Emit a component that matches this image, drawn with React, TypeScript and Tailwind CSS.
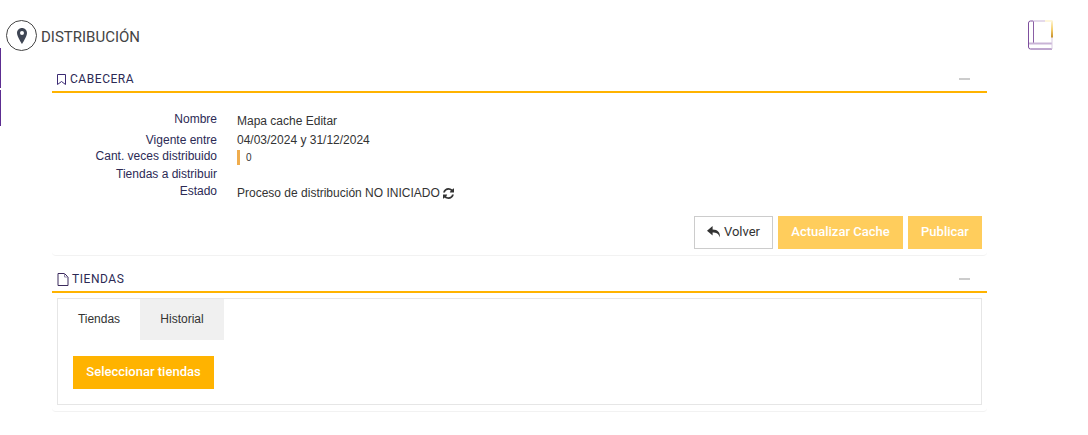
const rows = [
  { label: "Nombre", h: "h-[22px]", labelPad: "pt-[3px]", pad: "pt-[5px]", value: "Mapa cache Editar" },
  { label: "Vigente entre", h: "h-[18px]", labelPad: "pt-[2px]", pad: "pt-[2px]", value: "04/03/2024 y 31/12/2024" },
  { label: "Cant. veces distribuido", h: "h-[18px]", labelPad: "pt-0", pad: "pt-[3px]", value: "" },
  { label: "Tiendas a distribuir", h: "h-[17px]", labelPad: "pt-0", pad: "pt-0", value: "" },
  { label: "Estado", h: "h-[20px]", labelPad: "pt-0", pad: "pt-[2px]", value: "" },
];

const PinIcon = () => (
  <svg width="10" height="16" viewBox="0 0 10 16" className="text-[#3f4654]">
    <path
      fill="currentColor"
      fillRule="evenodd"
      d="M5 0C2.200 0 0 2.200 0 5c0 3.500 5 11 5 11s5-7.500 5-11c0-2.800-2.200-5-5-5zm0 3a2 2 0 1 1 0 4 2 2 0 0 1 0-4z"
    />
  </svg>
);

const BookIcon = () => (
  <svg width="25" height="30" viewBox="0 0 25 30" fill="none">
    <defs>
      <linearGradient id="bookEdge" gradientUnits="userSpaceOnUse" x1="0" y1="0" x2="0" y2="17">
        <stop offset="0" stopColor="#fff8dc" />
        <stop offset="0.55" stopColor="#f5d070" />
        <stop offset="1" stopColor="#c8922e" />
      </linearGradient>
    </defs>
    <path d="M5 1H2.500A2 2 0 0 0 .5 3v24a2 2 0 0 0 2 2H24" stroke="#7f4f9e" />
    <path d="M5.500 1v22" stroke="#8a5ea5" />
    <path d="M5 1h12" stroke="#c9b4d6" />
    <path d="M1 23.500h23" stroke="#c9b4d6" strokeWidth="2" />
    <path d="M24 17v12" stroke="#d9cbe2" />
    <path d="M24 .5v17" stroke="url(#bookEdge)" strokeWidth="2" />
    <path d="M17 1h7" stroke="#fff4cf" strokeWidth="1.500" />
  </svg>
);

const BookmarkIcon = () => (
  <svg width="9" height="11" viewBox="0 0 9 11" fill="none" className="text-[#3b2a73] mr-px">
    <path d="M.5.500h8v10l-4-3-4 3z" stroke="currentColor" />
  </svg>
);

const FileIcon = () => (
  <svg width="12" height="13" viewBox="0 0 12 13" fill="none" className="text-[#3b2a5c]">
    <path d="M1 .500h6.500L11 4v8.500H1z" stroke="currentColor" />
    <path d="M7.500.500V4H11" stroke="#8f86a8" />
  </svg>
);

const ReplyIcon = () => (
  <svg width="14" height="12" viewBox="0 0 14 12">
    <path fill="#333" d="M5.600 0 0 4.700l5.600 4.700V6.500c3.600 0 6 .7 7.300 5 .5-5.200-2-8-7.300-8.100z" />
  </svg>
);

const RefreshIcon = () => (
  <svg width="11" height="11" viewBox="0 0 1536 1536" className="ml-[3px] mt-[1px]">
    <path
      fill="#333"
      d="M1511 928q0 5-1 7-64 268-268 434.500T764 1536q-146 0-282.500-55T238 1324l-129 129q-19 19-45 19t-45-19-19-45V960q0-26 19-45t45-19h448q26 0 45 19t19 45-19 45l-137 137q71 66 161 102t187 36q134 0 250-65t186-179q11-17 53-117 8-23 30-23h192q13 0 22.500 9.500t9.500 22.500zm25-800v448q0 26-19 45t-45 19h-448q-26 0-45-19t-19-45 19-45l138-138Q969 256 768 256q-134 0-250 65T332 500q-11 17-53 117-8 23-30 23H50q-13 0-22.500-9.500T18 608v-7q65-268 270-434.500T768 0q146 0 284 55.500T1297 212l130-129q19-19 45-19t45 19 19 45z"
    />
  </svg>
);

const SectionHeader = ({ icon, title }: { icon: React.ReactNode; title: string }) => (
  <div className="flex items-center justify-between h-[28px] border-b-2 border-[#ffb300] pl-[5px] pr-[17px] pt-[2px]">
    <div className="flex items-center gap-[3px] text-[12px] tracking-[0.55px] text-[#2c2a55]">
      {icon}
      <span>{title}</span>
    </div>
    <div className="w-[11px] h-[2px] bg-[#cccccc]" />
  </div>
);

export default function App() {
  return (
    <div className="w-[1088px] h-[435px] bg-white flex font-['Roboto',sans-serif] overflow-hidden">
      <div className="w-[52px] shrink-0 relative">
        <div className="absolute left-0 top-[48px] w-px h-[40px] bg-[#5c2d91]" />
        <div className="absolute left-0 top-[90px] w-px h-[36px] bg-[#5c2d91]" />
      </div>

      <div className="w-[935px] shrink-0">
        <div className="h-[65px] flex items-start pt-[20px] -ml-[46px]">
          <div className="w-[31px] h-[31px] rounded-full border border-[#444] flex items-center justify-center mr-[4px]">
            <PinIcon />
          </div>
          <span className="text-[15px] leading-[32px] pt-px text-[#444]">DISTRIBUCIÓN</span>
        </div>

        <SectionHeader icon={<BookmarkIcon />} title="CABECERA" />

        <div className="h-[163px] border-b border-[#f2f2f2] rounded-b pt-[14px] text-[12px] font-['Liberation_Sans',sans-serif]">
          {rows.map((r) => (
            <div key={r.label} className={`flex ${r.h}`}>
              <div className={`w-[165px] text-right text-[#2c2a55] ${r.labelPad}`}>{r.label}</div>
              <div className={`ml-[20px] flex items-start text-[#333] ${r.pad}`}>
                {r.label === "Cant. veces distribuido" && (
                  <div className="flex items-center">
                    <div className="w-[3px] h-[15px] bg-[#f0ad4e]" />
                    <span className="ml-[6px] text-[10px] leading-[15px]">0</span>
                  </div>
                )}
                {r.label === "Estado" ? (
                  <div className="flex items-center">
                    <span>Proceso de distribución NO INICIADO</span>
                    <RefreshIcon />
                  </div>
                ) : (
                  r.value
                )}
              </div>
            </div>
          ))}

          <div className="flex justify-end gap-[5px] pr-[5px] mt-[14px] font-['Roboto',sans-serif]">
            <button className="h-[33px] w-[79px] border border-[#cccccc] bg-white flex items-center justify-center gap-[3px] pb-[2px] text-[13px] text-[#333]">
              <ReplyIcon />
              Volver
            </button>
            <button className="h-[33px] w-[125px] bg-[#ffcd5c] text-white text-[13px] font-medium pb-[2px]">Actualizar Cache</button>
            <button className="h-[33px] w-[74px] bg-[#ffcd5c] text-white text-[13px] font-medium pb-[2px]">Publicar</button>
          </div>
        </div>

        <div className="mt-[9px]">
          <SectionHeader icon={<FileIcon />} title="TIENDAS" />
        </div>

        <div className="h-[119px] border-b border-[#f2f2f2] rounded-b pt-[5px] px-[5px]">
          <div className="h-[107px] border border-[#e6e6e6]">
            <div className="flex text-[12px] text-[#333] font-['Liberation_Sans',sans-serif]">
              <div className="w-[82px] h-[41px] flex items-center justify-center pb-[2px]">Tiendas</div>
              <div className="w-[84px] h-[41px] flex items-center justify-center bg-[#f0f0f0] pb-[2px]">Historial</div>
            </div>
            <div className="pl-[15px] pt-[16px]">
              <button className="h-[33px] w-[141px] bg-[#ffb300] text-white text-[13px] font-medium pb-[2px]">Seleccionar tiendas</button>
            </div>
          </div>
        </div>
      </div>

      <div className="pl-[41px] pt-[20px]">
        <BookIcon />
      </div>
    </div>
  );
}
